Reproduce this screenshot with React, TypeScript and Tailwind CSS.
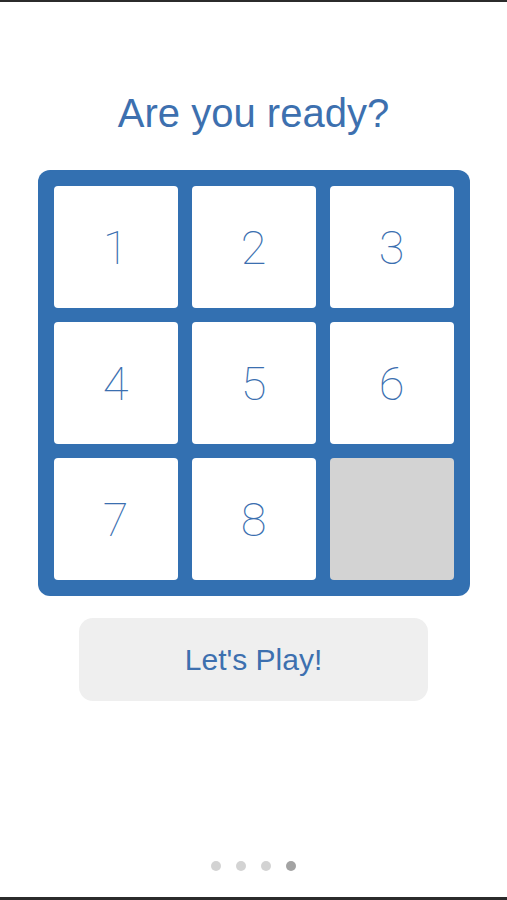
const tiles = [1, 2, 3, 4, 5, 6, 7, 8, 0];

const Tile = ({ n }: { n: number }) =>
  n === 0 ? (
    <div className="h-[122px] rounded-[4px] bg-[#d3d3d3]" />
  ) : (
    <div className="h-[122px] rounded-[4px] bg-white flex items-center justify-center text-[47px] leading-none font-thin text-[#3b6fb0]">
      {n}
    </div>
  );

export default function App() {
  return (
    <div
      className="h-[900px] flex flex-col items-center bg-white border-t-2 border-b-[3px] border-[#2b2b2b]"
      style={{ fontFamily: '"Roboto", "Liberation Sans", sans-serif' }}
    >
      <h1
        className="mt-[91px] h-[40px] leading-[40px] text-[40px] font-normal text-[#3d70af]"
        style={{ fontFamily: '"Liberation Sans", Arial, sans-serif' }}
      >
        Are you ready?
      </h1>

      <div className="mt-[37px] w-[432px] p-4 grid grid-cols-3 gap-[14px] rounded-[12px] bg-[#3370b1]">
        {tiles.map((n) => (
          <Tile key={n} n={n} />
        ))}
      </div>

      <button
        className="mt-[22px] w-[349px] h-[83px] rounded-[14px] bg-[#efefef] text-[30px] text-[#3d70af]"
        style={{ fontFamily: '"Liberation Sans", Arial, sans-serif' }}
      >
        Let's Play!
      </button>

      <div className="mt-auto mb-[26px] flex gap-[15px]">
        <span className="w-[10px] h-[10px] rounded-full bg-[#d3d3d3]" />
        <span className="w-[10px] h-[10px] rounded-full bg-[#d3d3d3]" />
        <span className="w-[10px] h-[10px] rounded-full bg-[#d3d3d3]" />
        <span className="w-[10px] h-[10px] rounded-full bg-[#a3a3a3]" />
      </div>
    </div>
  );
}
